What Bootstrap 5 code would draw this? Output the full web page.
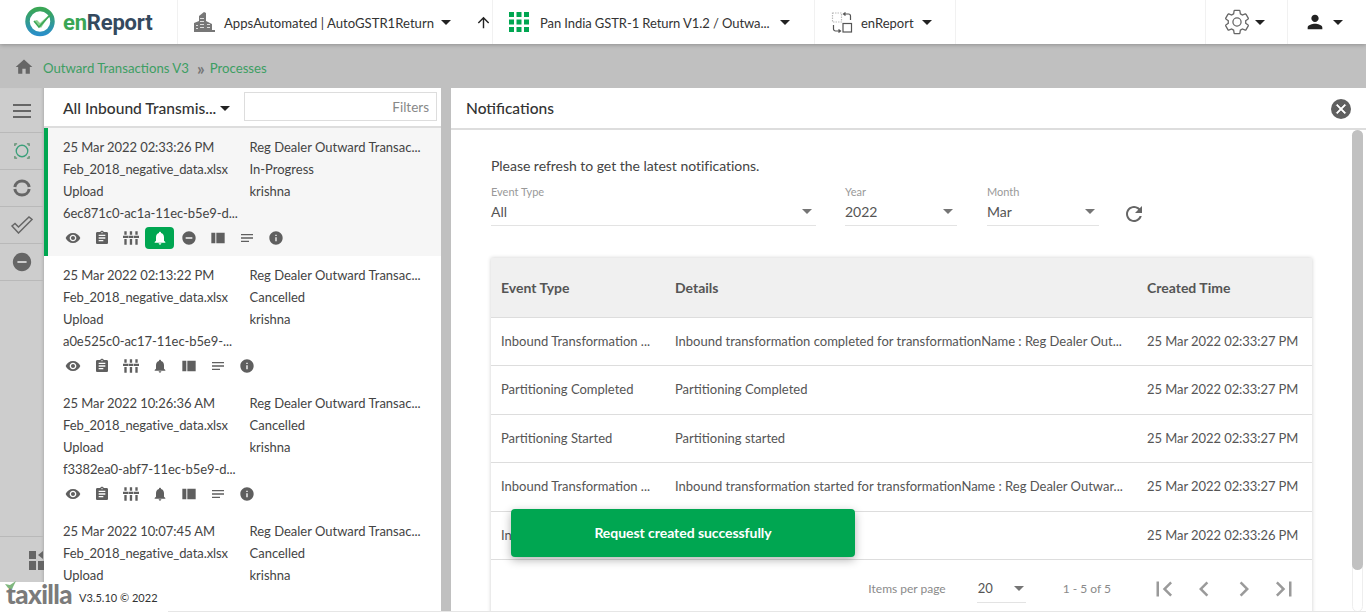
<!DOCTYPE html>
<html lang="en">
<head>
<meta charset="utf-8">
<title>enReport</title>
<link rel="stylesheet" href="https://cdn.jsdelivr.net/npm/bootstrap@5.3.0/dist/css/bootstrap.min.css">
<script src="https://cdn.jsdelivr.net/npm/bootstrap@5.3.0/dist/js/bootstrap.bundle.min.js"></script>
<style>
html, body { height: 612px; overflow: hidden; }
body { font-family: Lato, "Liberation Sans", sans-serif; font-size: 13px; color: #444; background: #c0c0c0; position: relative; }
svg { display: block; flex: none; }
.caret { width: 0; height: 0; border-left: 5px solid transparent; border-right: 5px solid transparent; border-top: 5px solid #222; flex: none; }

.topbar { height: 44px; background: #fff; box-shadow: 0 1px 4px rgba(0,0,0,.25); position: relative; z-index: 3; color: #333; }
.seg { height: 44px; border-right: 1px solid #f1f1f1; }
.seg-label { padding-top: 3px; white-space: nowrap; }
.seg-logo { width: 178px; padding-left: 24px; }
.seg-org { width: 287px; padding-left: 15px; border-right: 0; }
.seg-org svg { margin-right: 9px; }
.seg-org .seg-label { font-size: 13.12px; margin-right: 7px; }
.seg-up { width: 28px; padding-left: 10px; }
.seg-app { width: 322px; padding-left: 16px; }
.seg-app svg { margin-right: 11px; }
.seg-app .seg-label { letter-spacing: -.08px; margin-right: 11px; }
.seg-rep { width: 141px; padding-left: 16px; }
.seg-set { width: 83px; padding-left: 17px; border-left: 1px solid #f1f1f1; }
.seg-set svg { margin-right: 4px; }
.seg-usr { width: 78px; padding-left: 16px; }
.seg-usr svg { margin-right: 7px; }
.brand-name { font-family: Roboto, sans-serif; font-weight: 700; font-size: 22px; letter-spacing: -.2px; color: #34495e; line-height: 1; margin-left: 3px; padding-top: 1px; }
.brand-name b { color: #3aa655; font-weight: 700; }

.crumbs { height: 44px; padding: 6px 0 0 14px; color: #3d9e63; font-size: 13.2px; }
.crumbs svg { margin-top: -5px; margin-right: 9px; }
.crumbs .sep { color: #777; font-weight: 700; font-size: 17px; line-height: 1; margin: -2px 5px 0 8px; }

.workarea { height: 524px; }
.rail { width: 44px; background: #cdcdcd; box-shadow: inset -3px 0 3px -2px rgba(0,0,0,.15); }
.rail-item { height: 37px; border-bottom: 1px solid #b9b9b9; }
.rail-top { height: 45px; padding-top: 2px; }
.rail-bottom { border-top: 1px solid #b9b9b9; padding: 14px 0 0 29px; margin-top: auto; height: 76px; }

.listpane { width: 397px; background: #fff; }
.listhead { height: 40px; border-bottom: 2px solid #ddd; padding: 5px 4px 0 19px; }
.listhead-title { font-size: 15.6px; font-weight: 500; color: #333; width: 152px; }
.filterbox { width: 193px; height: 29px; margin-top: -1px; padding-top: 2px; border: 1px solid #ddd; font-size: 13.5px; color: #888; padding-right: 7px; }
.listscroll { height: 465px; overflow: hidden; }
.proc { height: 128px; padding: 8px 16px 0 19px; line-height: 22px; }
.proc.active-proc { background: #f6f6f6; border-left: 4px solid #00a651; padding-left: 15px; }
.proc-col1 { width: 187px; letter-spacing: -.07px; }
.proc-col2 { width: 176px; }
.proc-col1 div, .proc-col2 div { white-space: nowrap; overflow: hidden; }
.proc-icons { height: 22px; margin-left: -5px; margin-top: 3px; fill: #5f5f5f; }
.proc-ico { width: 29px; height: 22px; border-radius: 4px; }
.proc-ico.on { background: #00a651; fill: #fff; }

.notifpane { width: 915px; margin-left: 10px; background: #fff; position: relative; }
.notifhead { height: 42px; border-bottom: 2px solid #ddd; padding: 1px 15px 0 15px; font-size: 15.5px; font-weight: 500; color: #333; }
.closebtn { width: 20px; height: 20px; border-radius: 50%; background: #5f5f5f; }
.notifbody { height: 482px; overflow: hidden; padding: 0 54px 0 40px; }
.hint { padding-top: 27px; line-height: 18px; font-size: 14px; color: #444; letter-spacing: -.03px; }
.fld { border-bottom: 1px solid #e3e3e3; height: 28px; padding-top: 3px; }
.fld-label { font-size: 11px; line-height: 13px; color: #999; }
.fld-val { font-size: 14px; line-height: 21px; color: #555; }
.tri { width: 0; height: 0; border-left: 5.5px solid transparent; border-right: 5.5px solid transparent; border-top: 5.5px solid #757575; }
.fields { margin-top: 10px; height: 40px; }
.f-event { width: 325px; margin-right: 29px; }
.f-year { width: 112px; margin-right: 30px; }
.f-month { width: 112px; margin-right: 23px; }
.refresh-ico { margin-top: 17px; }

.evtable { margin-top: 33px; box-shadow: 0 0 4px rgba(0,0,0,.2); }
.evtable table { table-layout: fixed; width: 100%; margin: 0; font-size: 13px; }
.evtable th { height: 59px; background: #f0f0f0; font-weight: 700; font-size: 14px; color: #555; vertical-align: middle; padding: 0 10px; border-bottom: 1px solid #ddd; }
.evtable td { height: 48.5px; vertical-align: middle; padding: 0 10px; color: #555; border-bottom: 1px solid #ddd; white-space: nowrap; overflow: hidden; }
.col-ev { width: 174px; }
.col-time { width: 175px; }
.evtable td:last-child { letter-spacing: -.07px; }
.pager { height: 58px; font-size: 12px; color: #8a8a8a; }
.pager-size { width: 49px; height: 28px; border-bottom: 1px solid #e3e3e3; color: #555; margin: 0 37px 0 31px; font-size: 13px; padding: 0 2px 0 1px; }
.pager-btns { margin-left: 38px; gap: 10px; margin-right: 13px; fill: #9a9a9a; }

.scrolltrack { position: absolute; top: 42px; right: 3px; width: 11px; height: 482px; border: 1px solid #eee; border-radius: 6px; }
.scrollthumb { height: 440px; background: #c1c1c1; border-radius: 6px; margin: -1px; }

.appfoot { position: absolute; left: 0; bottom: 0; width: 168px; height: 30px; background: #fff; z-index: 2; padding-left: 6px; font-size: 11px; color: #333; }
.foot-logo { font-weight: 900; font-size: 26px; color: #7b7b7b; line-height: 1; letter-spacing: -.6px; margin: -7px 7px 0 0; position: relative; }
.foot-leaf { position: absolute; left: -1px; top: 0; }
.foot-ver { padding-top: 2px; }
.footline { position: absolute; left: 168px; right: 0; bottom: 0; height: 1px; background: #e6e6e6; z-index: 2; }

.toastbox { position: absolute; left: 511px; top: 509px; width: 344px; height: 48px; padding-bottom: 2px; background: #00a651; border-radius: 4px; box-shadow: 0 3px 10px rgba(0,0,0,.3); color: #fff; font-size: 14px; font-weight: 700; letter-spacing: -.05px; z-index: 5; }
</style>
</head>
<body>
<svg width="0" height="0" class="position-absolute">
  <defs>
    <linearGradient id="ringgrad" x1="0" y1="0" x2="0" y2="1">
      <stop offset="0" stop-color="#3aa655"/><stop offset="1" stop-color="#2a8fc7"/>
    </linearGradient>
    <symbol id="i-eye" viewBox="0 0 24 24"><path d="M12 4.5C7 4.5 2.73 7.61 1 12c1.73 4.39 6 7.5 11 7.5s9.27-3.11 11-7.5c-1.73-4.39-6-7.5-11-7.5zM12 17c-2.76 0-5-2.24-5-5s2.24-5 5-5 5 2.24 5 5-2.24 5-5 5zm0-8c-1.66 0-3 1.34-3 3s1.34 3 3 3 3-1.34 3-3-1.34-3-3-3z"/></symbol>
    <symbol id="i-clip" viewBox="0 0 24 24"><path d="M19 3h-4.18C14.4 1.84 13.3 1 12 1c-1.3 0-2.4.84-2.82 2H5c-1.1 0-2 .9-2 2v14c0 1.1.9 2 2 2h14c1.1 0 2-.9 2-2V5c0-1.1-.9-2-2-2zm-7 0c.55 0 1 .45 1 1s-.45 1-1 1-1-.45-1-1 .45-1 1-1zm2 14H7v-2h7v2zm3-4H7v-2h10v2zm0-4H7V7h10v2z"/></symbol>
    <symbol id="i-cols" viewBox="0 0 24 24"><path d="M2 2h3.500v5H2zM10.200 2h3.500v5h-3.500zM18.500 2H22v5h-3.500zM0 8.500h7.500V12H0zM8.200 8.500h7.500V12H8.200zM16.500 8.500H24V12h-7.500zM2 13.500h3.500V22H2zM10.200 13.500h3.500V22h-3.500zM18.500 13.500H22V22h-3.500z"/></symbol>
    <symbol id="i-bell" viewBox="0 0 24 24"><path d="M12 22c1.100 0 2-.9 2-2h-4c0 1.100.89 2 2 2zm6-6v-5c0-3.070-1.640-5.640-4.500-6.320V4c0-.83-.67-1.500-1.500-1.500s-1.500.67-1.500 1.500v.68C7.630 5.360 6 7.920 6 11v5l-2 2v1h16v-1l-2-2z"/></symbol>
    <symbol id="i-minus" viewBox="0 0 24 24"><path d="M12 2C6.480 2 2 6.480 2 12s4.480 10 10 10 10-4.480 10-10S17.520 2 12 2zm5 11H7v-2h10v2z"/></symbol>
    <symbol id="i-split" viewBox="0 0 24 24"><path d="M2 4h6v16H2zM9.500 4H22v16H9.500z"/></symbol>
    <symbol id="i-notes" viewBox="0 0 24 24"><path d="M3 18h12v-2H3v2zM3 6v2h18V6H3zm0 7h18v-2H3v2z"/></symbol>
    <symbol id="i-info" viewBox="0 0 24 24"><path d="M12 2C6.480 2 2 6.480 2 12s4.480 10 10 10 10-4.480 10-10S17.520 2 12 2zm1 15h-2v-6h2v6zm0-8h-2V7h2v2z"/></symbol>
    <symbol id="i-first" viewBox="0 0 24 24"><path d="M18.410 16.590L13.820 12l4.590-4.590L17 6l-6 6 6 6zM6 6h2v12H6z"/></symbol>
    <symbol id="i-prev" viewBox="0 0 24 24"><path d="M15.410 7.410L14 6l-6 6 6 6 1.410-1.410L10.830 12z"/></symbol>
    <symbol id="i-next" viewBox="0 0 24 24"><path d="M8.590 16.590L10 18l6-6-6-6-1.410 1.410L13.170 12z"/></symbol>
    <symbol id="i-last" viewBox="0 0 24 24"><path d="M5.590 7.410L10.180 12l-4.590 4.590L7 18l6-6-6-6zM16 6h2v12h-2z"/></symbol>
  </defs>
</svg>

<nav class="topbar d-flex align-items-center">
  <div class="seg seg-logo d-flex align-items-center gap-1">
    <svg width="32" height="32" viewBox="0 0 32 32">
      <circle cx="16" cy="15.500" r="12.500" fill="none" stroke="url(#ringgrad)" stroke-width="4.500"/>
      <path d="M10 15l3 -1 3 3 10 -9 -9 14z" fill="#8ccf8e"/>
      <path d="M10 15l5 6 12 -13" fill="none" stroke="#3aa655" stroke-width="1.500"/>
    </svg>
    <span class="brand-name"><b>en</b>Report</span>
  </div>
  <div class="seg seg-org d-flex align-items-center">
    <svg width="22" height="24" viewBox="0 0 22 24" fill="#777">
      <path d="M1 22v-9l5-2V6l5-4 2 1v8l6 3v6h3v2z"/>
      <path d="M7 8h4v1H7zM7 11h4v1H7zM7 14h4v1H7zM7 17h4v1H7zM14 14h3v1h-3zM14 17h3v1h-3zM3 15h2v1H3zM3 18h2v1H3z" fill="#ddd"/>
    </svg>
    <span class="seg-label">AppsAutomated | AutoGSTR1Return</span>
    <span class="caret"></span>
  </div>
  <div class="seg seg-up d-flex align-items-center">
    <svg width="17" height="17" viewBox="0 0 24 24" fill="#222"><path d="M4 12l1.410 1.410L11 7.830V20h2V7.830l5.580 5.590L20 12l-8-8-8 8z"/></svg>
  </div>
  <div class="seg seg-app d-flex align-items-center">
    <svg width="20" height="20" viewBox="0 0 20 20" fill="#00a651">
      <path d="M0 0h5v5H0zM7.500 0h5v5h-5zM15 0h5v5h-5zM0 7.500h5v5H0zM7.500 7.500h5v5h-5zM15 7.500h5v5h-5zM0 15h5v5H0zM7.500 15h5v5h-5zM15 15h5v5h-5z"/>
    </svg>
    <span class="seg-label">Pan India GSTR-1 Return V1.2 / Outwa...</span>
    <span class="caret"></span>
  </div>
  <div class="seg seg-rep d-flex align-items-center">
    <svg width="22" height="21" viewBox="0 0 21 21" fill="none" stroke="#555" stroke-width="1.200" class="me-2">
      <rect x="1" y="1" width="9" height="9" stroke="#bbb" stroke-dasharray="1.500 1"/>
      <rect x="11.500" y="11.500" width="8.500" height="8.500"/>
      <path d="M12 2h5a2 2 0 0 1 2 2v4M14 0.500L12 2l2 1.500M9 19H4a2 2 0 0 1-2-2v-4M7 17.500L9 19l-2 1.500"/>
    </svg>
    <span class="seg-label me-2">enReport</span>
    <span class="caret"></span>
  </div>
  <div class="seg seg-set d-flex align-items-center ms-auto">
    <svg width="28" height="28" viewBox="0 0 24 24" fill="none" stroke="#666" stroke-width="1.100">
      <path d="M19.430 12.980c.04-.32.07-.64.07-.98s-.03-.66-.07-.98l2.110-1.650c.19-.15.24-.42.12-.64l-2-3.460c-.12-.22-.39-.3-.61-.22l-2.490 1c-.52-.4-1.080-.73-1.690-.98l-.38-2.650C14.460 2.180 14.250 2 14 2h-4c-.25 0-.46.18-.49.42l-.38 2.650c-.61.25-1.170.59-1.690.98l-2.490-1c-.23-.09-.49 0-.61.22l-2 3.460c-.13.22-.07.49.12.64l2.110 1.650c-.04.32-.07.65-.07.98s.03.66.07.98l-2.110 1.650c-.19.15-.24.42-.12.64l2 3.460c.12.22.39.3.61.22l2.490-1c.52.4 1.080.73 1.690.98l.38 2.650c.03.24.24.42.49.42h4c.25 0 .46-.18.49-.42l.38-2.650c.61-.25 1.170-.59 1.690-.98l2.490 1c.23.09.49 0 .61-.22l2-3.460c.12-.22.07-.49-.12-.64l-2.110-1.650z"/>
      <circle cx="12" cy="12" r="3.500"/>
    </svg>
    <span class="caret"></span>
  </div>
  <div class="seg seg-usr d-flex align-items-center border-0">
    <svg width="22" height="22" viewBox="0 0 24 24" fill="#222"><path d="M12 12c2.210 0 4-1.790 4-4s-1.790-4-4-4-4 1.790-4 4 1.790 4 4 4zm0 2c-2.670 0-8 1.340-8 4v2h16v-2c0-2.660-5.330-4-8-4z"/></svg>
    <span class="caret"></span>
  </div>
</nav>

<div class="crumbs d-flex align-items-center">
  <svg width="20" height="20" viewBox="0 0 24 24" fill="#666"><path d="M10 20v-6h4v6h5v-8h3L12 3 2 12h3v8z"/></svg>
  <span>Outward Transactions V3</span>
  <span class="sep">&raquo;</span>
  <span>Processes</span>
</div>

<div class="workarea d-flex">
  <aside class="rail d-flex flex-column">
    <div class="rail-item rail-top d-flex align-items-center justify-content-center">
      <svg width="20" height="16" viewBox="0 0 20 16" fill="#666"><path d="M1 1h18v2H1zM1 7h18v2H1zM1 13h18v2H1z"/></svg>
    </div>
    <div class="rail-item d-flex align-items-center justify-content-center">
      <svg width="16" height="16" viewBox="0 0 18 18" fill="none" stroke="#3aa07a" stroke-width="1.500"><circle cx="9" cy="9" r="6.500"/><path d="M1 3.500V1h2.500M14.500 1H17v2.500M17 14.500V17h-2.500M3.500 17H1v-2.500" stroke="#5f8f70"/></svg>
    </div>
    <div class="rail-item d-flex align-items-center justify-content-center">
      <svg width="18" height="18" viewBox="0 0 18 18" fill="none" stroke="#666" stroke-width="3"><path d="M1.800 8A7.300 7.300 0 0 1 16.200 8M16.200 10A7.300 7.300 0 0 1 1.800 10"/></svg>
    </div>
    <div class="rail-item d-flex align-items-center justify-content-center">
      <svg width="22" height="18" viewBox="0 0 22 18" fill="none" stroke="#666" stroke-width="1.500"><path d="M1 10l3-2.500 3.500 3.500L18 1l3 2.500L7.500 17z"/></svg>
    </div>
    <div class="rail-item d-flex align-items-center justify-content-center">
      <svg width="22" height="22" viewBox="0 0 24 24" fill="#666"><use href="#i-minus"/></svg>
    </div>
    <div class="rail-bottom">
      <svg width="15" height="19" viewBox="0 0 15 19" fill="#666"><path d="M0 0h7v8H0zM0 10h7v9H0zM9 10h6v9H9zM9 4l5-4v8z"/></svg>
    </div>
  </aside>

  <section class="listpane">
    <div class="listhead d-flex align-items-start justify-content-between">
      <div class="listhead-title d-flex align-items-center pt-1 text-nowrap">All Inbound Transmis...<span class="caret ms-1"></span></div>
      <div class="filterbox d-flex align-items-center justify-content-end">Filters</div>
    </div>
    <div class="listscroll">
      <div class="proc active-proc">
        <div class="d-flex">
          <div class="proc-col1"><div>25 Mar 2022 02:33:26 PM</div><div>Feb_2018_negative_data.xlsx</div><div>Upload</div><div>6ec871c0-ac1a-11ec-b5e9-d...</div></div>
          <div class="proc-col2"><div>Reg Dealer Outward Transac...</div><div>In-Progress</div><div>krishna</div></div>
        </div>
        <div class="proc-icons d-flex">
          <span class="proc-ico d-flex align-items-center justify-content-center"><svg width="16" height="16"><use href="#i-eye"/></svg></span>
          <span class="proc-ico d-flex align-items-center justify-content-center"><svg width="16" height="16"><use href="#i-clip"/></svg></span>
          <span class="proc-ico d-flex align-items-center justify-content-center"><svg width="16" height="16"><use href="#i-cols"/></svg></span>
          <span class="proc-ico on d-flex align-items-center justify-content-center"><svg width="16" height="16"><use href="#i-bell"/></svg></span>
          <span class="proc-ico d-flex align-items-center justify-content-center"><svg width="16" height="16"><use href="#i-minus"/></svg></span>
          <span class="proc-ico d-flex align-items-center justify-content-center"><svg width="16" height="16"><use href="#i-split"/></svg></span>
          <span class="proc-ico d-flex align-items-center justify-content-center"><svg width="16" height="16"><use href="#i-notes"/></svg></span>
          <span class="proc-ico d-flex align-items-center justify-content-center"><svg width="16" height="16"><use href="#i-info"/></svg></span>
        </div>
      </div>
      <div class="proc">
        <div class="d-flex">
          <div class="proc-col1"><div>25 Mar 2022 02:13:22 PM</div><div>Feb_2018_negative_data.xlsx</div><div>Upload</div><div>a0e525c0-ac17-11ec-b5e9-...</div></div>
          <div class="proc-col2"><div>Reg Dealer Outward Transac...</div><div>Cancelled</div><div>krishna</div></div>
        </div>
        <div class="proc-icons d-flex">
          <span class="proc-ico d-flex align-items-center justify-content-center"><svg width="16" height="16"><use href="#i-eye"/></svg></span>
          <span class="proc-ico d-flex align-items-center justify-content-center"><svg width="16" height="16"><use href="#i-clip"/></svg></span>
          <span class="proc-ico d-flex align-items-center justify-content-center"><svg width="16" height="16"><use href="#i-cols"/></svg></span>
          <span class="proc-ico d-flex align-items-center justify-content-center"><svg width="16" height="16"><use href="#i-bell"/></svg></span>
          <span class="proc-ico d-flex align-items-center justify-content-center"><svg width="16" height="16"><use href="#i-split"/></svg></span>
          <span class="proc-ico d-flex align-items-center justify-content-center"><svg width="16" height="16"><use href="#i-notes"/></svg></span>
          <span class="proc-ico d-flex align-items-center justify-content-center"><svg width="16" height="16"><use href="#i-info"/></svg></span>
        </div>
      </div>
      <div class="proc">
        <div class="d-flex">
          <div class="proc-col1"><div>25 Mar 2022 10:26:36 AM</div><div>Feb_2018_negative_data.xlsx</div><div>Upload</div><div>f3382ea0-abf7-11ec-b5e9-d...</div></div>
          <div class="proc-col2"><div>Reg Dealer Outward Transac...</div><div>Cancelled</div><div>krishna</div></div>
        </div>
        <div class="proc-icons d-flex">
          <span class="proc-ico d-flex align-items-center justify-content-center"><svg width="16" height="16"><use href="#i-eye"/></svg></span>
          <span class="proc-ico d-flex align-items-center justify-content-center"><svg width="16" height="16"><use href="#i-clip"/></svg></span>
          <span class="proc-ico d-flex align-items-center justify-content-center"><svg width="16" height="16"><use href="#i-cols"/></svg></span>
          <span class="proc-ico d-flex align-items-center justify-content-center"><svg width="16" height="16"><use href="#i-bell"/></svg></span>
          <span class="proc-ico d-flex align-items-center justify-content-center"><svg width="16" height="16"><use href="#i-split"/></svg></span>
          <span class="proc-ico d-flex align-items-center justify-content-center"><svg width="16" height="16"><use href="#i-notes"/></svg></span>
          <span class="proc-ico d-flex align-items-center justify-content-center"><svg width="16" height="16"><use href="#i-info"/></svg></span>
        </div>
      </div>
      <div class="proc">
        <div class="d-flex">
          <div class="proc-col1"><div>25 Mar 2022 10:07:45 AM</div><div>Feb_2018_negative_data.xlsx</div><div>Upload</div></div>
          <div class="proc-col2"><div>Reg Dealer Outward Transac...</div><div>Cancelled</div><div>krishna</div></div>
        </div>
      </div>
    </div>
  </section>

  <section class="notifpane">
    <div class="notifhead d-flex align-items-center justify-content-between">
      <span>Notifications</span>
      <span class="closebtn d-flex align-items-center justify-content-center">
        <svg width="16" height="16" viewBox="0 0 24 24" fill="#fff" stroke="#fff"><path d="M19 6.410L17.590 5 12 10.590 6.410 5 5 6.410 10.590 12 5 17.590 6.410 19 12 13.410 17.590 19 19 17.590 13.410 12z"/></svg>
      </span>
    </div>
    <div class="notifbody">
      <div class="hint">Please refresh to get the latest notifications.</div>
      <div class="fields d-flex align-items-start">
        <div class="f-event"><div class="fld-label">Event Type</div><div class="fld d-flex justify-content-between align-items-start"><span class="fld-val">All</span><span class="tri mt-2 me-1"></span></div></div>
        <div class="f-year"><div class="fld-label">Year</div><div class="fld d-flex justify-content-between align-items-start"><span class="fld-val">2022</span><span class="tri mt-2 me-1"></span></div></div>
        <div class="f-month"><div class="fld-label">Month</div><div class="fld d-flex justify-content-between align-items-start"><span class="fld-val">Mar</span><span class="tri mt-2 me-1"></span></div></div>
        <svg width="24" height="24" viewBox="0 0 24 24" fill="#666" class="refresh-ico"><path d="M17.650 6.350C16.200 4.900 14.210 4 12 4c-4.420 0-7.990 3.580-7.990 8s3.570 8 7.990 8c3.730 0 6.840-2.550 7.730-6h-2.080c-.82 2.330-3.040 4-5.650 4-3.310 0-6-2.690-6-6s2.690-6 6-6c1.660 0 3.140.69 4.220 1.780L13 11h7V4l-2.350 2.350z"/></svg>
      </div>
      <div class="evtable">
        <table class="table table-borderless">
          <thead>
            <tr><th class="col-ev">Event Type</th><th>Details</th><th class="col-time">Created Time</th></tr>
          </thead>
          <tbody>
            <tr><td>Inbound Transformation ...</td><td>Inbound transformation completed for transformationName : Reg Dealer Out...</td><td>25 Mar 2022 02:33:27 PM</td></tr>
            <tr><td>Partitioning Completed</td><td>Partitioning Completed</td><td>25 Mar 2022 02:33:27 PM</td></tr>
            <tr><td>Partitioning Started</td><td>Partitioning started</td><td>25 Mar 2022 02:33:27 PM</td></tr>
            <tr><td>Inbound Transformation ...</td><td>Inbound transformation started for transformationName : Reg Dealer Outwar...</td><td>25 Mar 2022 02:33:27 PM</td></tr>
            <tr><td>In</td><td></td><td>25 Mar 2022 02:33:26 PM</td></tr>
          </tbody>
        </table>
        <div class="pager d-flex align-items-center justify-content-end">
          <span>Items per page</span>
          <div class="pager-size d-flex align-items-center justify-content-between"><span>20</span><span class="tri"></span></div>
          <span>1 - 5 of 5</span>
          <div class="pager-btns d-flex">
            <svg width="30" height="30"><use href="#i-first"/></svg>
            <svg width="30" height="30"><use href="#i-prev"/></svg>
            <svg width="30" height="30"><use href="#i-next"/></svg>
            <svg width="30" height="30"><use href="#i-last"/></svg>
          </div>
        </div>
      </div>
    </div>
    <div class="scrolltrack"><div class="scrollthumb"></div></div>
  </section>
</div>

<footer class="appfoot d-flex align-items-center">
  <span class="foot-logo">taxilla<svg class="foot-leaf" width="12" height="8" viewBox="0 0 12 8" fill="#7fb77e"><path d="M0 3l5 1 6-4-4 8-4-1z"/></svg></span>
  <span class="foot-ver">V3.5.10 &copy; 2022</span>
</footer>
<div class="footline"></div>

<div class="toastbox d-flex align-items-center justify-content-center">Request created successfully</div>
</body>
</html>
